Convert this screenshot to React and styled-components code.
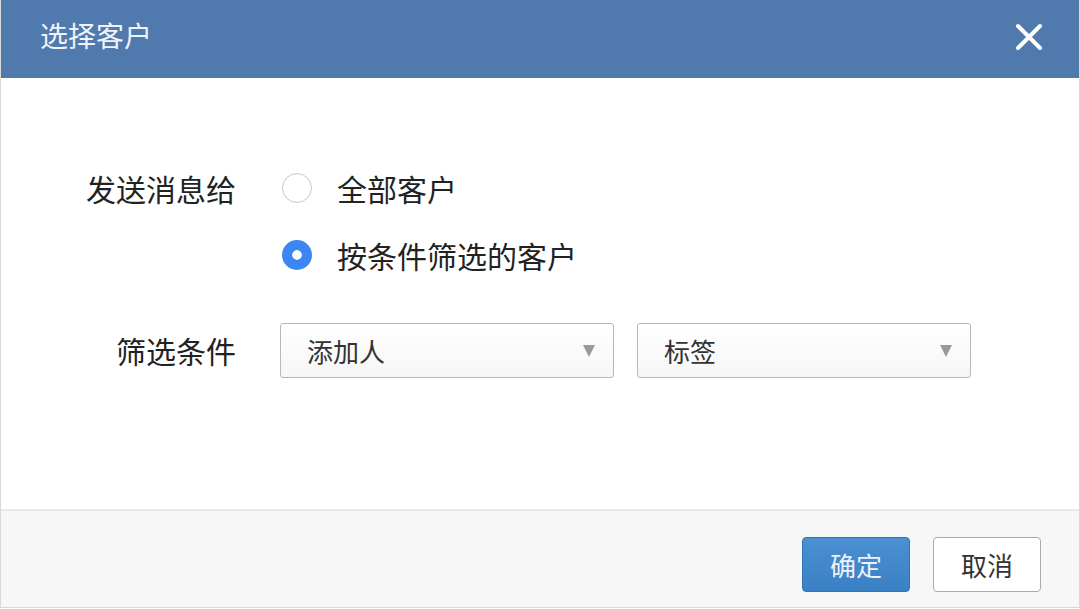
import React from "react";
import styled, { createGlobalStyle } from "styled-components";

const GlobalStyle = createGlobalStyle`
  html, body {
    margin: 0;
    padding: 0;
    background: #ffffff;
    font-family: "Noto Sans CJK SC", "Noto Sans", sans-serif;
  }
`;

const Dialog = styled.div`
  width: 1078px;
  height: 607px;
  border: 1px solid #d9d9d9;
  border-top: none;
  display: flex;
  flex-direction: column;
  background: #fff;
`;

const Header = styled.div`
  height: 78px;
  flex: none;
  background: #5079ad;
  display: flex;
  align-items: center;
  justify-content: space-between;
  padding: 0 35px 0 39px;
`;

const Title = styled.div`
  color: #eef3f9;
  font-size: 28px;
  line-height: 1;
  margin-top: -8px;
`;

const Close = styled.button`
  border: none;
  background: none;
  padding: 0;
  width: 30px;
  height: 30px;
  display: flex;
  align-items: center;
  justify-content: center;
  cursor: pointer;
  margin-top: -4px;
`;

const Body = styled.div`
  flex: 1;
  padding-top: 90px;
`;

const Form = styled.div`
  display: grid;
  grid-template-columns: 235px 1fr;
  column-gap: 44px;
  row-gap: 48px;
  align-items: start;
`;

const Label = styled.div`
  text-align: right;
  font-size: 30px;
  color: #222;
  line-height: ${(p) => p.$lh || 40}px;
`;

const RadioGroup = styled.div`
  display: flex;
  flex-direction: column;
  gap: 27px;
`;

const Option = styled.label`
  display: flex;
  align-items: center;
  height: 40px;
  gap: 25px;
  font-size: 30px;
  color: #222;
  cursor: pointer;
`;

const RadioDot = styled.span`
  width: 30px;
  height: 30px;
  margin-left: 2px;
  border-radius: 50%;
  box-sizing: border-box;
  flex: none;
  ${(p) =>
    p.$checked
      ? `background: #3b86f0; border: 10px solid #3b86f0; box-shadow: inset 0 0 0 5px #fff;`
      : `background: #fff; border: 1.5px solid #c8c8c8;`}
`;

const Selects = styled.div`
  display: flex;
  gap: 23px;
`;

const Select = styled.div`
  width: 334px;
  height: 55px;
  box-sizing: border-box;
  border: 1px solid #b8b8b8;
  border-radius: 3px;
  background: linear-gradient(#ffffff, #f6f6f6);
  display: flex;
  align-items: center;
  justify-content: space-between;
  padding: 0 18px 0 26px;
  font-size: 26px;
  color: #333;
`;

const Arrow = styled.span`
  width: 0;
  height: 0;
  border-left: 6px solid transparent;
  border-right: 6px solid transparent;
  border-top: 12px solid #999;
`;

const Footer = styled.div`
  height: 98px;
  flex: none;
  box-sizing: border-box;
  border-top: 2px solid #e8e8e8;
  background: #f7f7f7;
  display: flex;
  justify-content: flex-end;
  align-items: flex-start;
  gap: 23px;
  padding: 26px 38px 0 0;
`;

const Button = styled.button`
  width: 108px;
  height: 55px;
  border-radius: 4px;
  font-family: inherit;
  font-size: 26px;
  cursor: pointer;
  ${(p) =>
    p.$primary
      ? `background: linear-gradient(#4a90d2, #3a80c4); border: 1px solid #3274b5; color: #eaf2fb;`
      : `background: #fff; border: 1.5px solid #aaa; color: #333;`}
`;

export default function App() {
  return (
    <>
      <GlobalStyle />
      <Dialog>
        <Header>
          <Title>选择客户</Title>
          <Close aria-label="close">
            <svg width="28" height="28" viewBox="0 0 28 28">
              <path d="M3 3 L25 25 M25 3 L3 25" stroke="#fff" strokeWidth="4" strokeLinecap="round" />
            </svg>
          </Close>
        </Header>
        <Body>
          <Form>
            <Label>发送消息给</Label>
            <RadioGroup>
              <Option>
                <RadioDot />
                全部客户
              </Option>
              <Option>
                <RadioDot $checked />
                按条件筛选的客户
              </Option>
            </RadioGroup>
            <Label $lh={55}>筛选条件</Label>
            <Selects>
              <Select>
                添加人
                <Arrow />
              </Select>
              <Select>
                标签
                <Arrow />
              </Select>
            </Selects>
          </Form>
        </Body>
        <Footer>
          <Button $primary>确定</Button>
          <Button>取消</Button>
        </Footer>
      </Dialog>
    </>
  );
}
